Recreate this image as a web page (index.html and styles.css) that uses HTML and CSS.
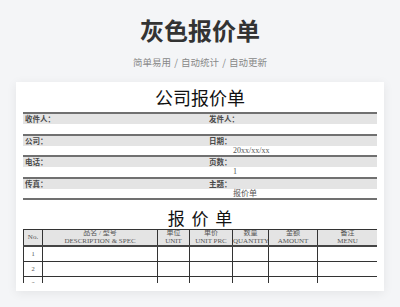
FILE: index.html
```html
<!DOCTYPE html>
<html lang="zh-CN">
<head>
<meta charset="utf-8">
<title>灰色报价单</title>
<link rel="stylesheet" href="styles.css">
</head>
<body>
<header class="hero">
  <h1 class="hero-title">灰色报价单</h1>
  <p class="hero-sub">简单易用 <span class="sep">/</span> 自动统计 <span class="sep">/</span> 自动更新</p>
</header>
<main class="card">
  <div class="sheet">
    <div class="sheet-title">公司报价单</div>
    <div class="info">
      <div class="info-row">
        <div class="cell"><div class="label">收件人：</div><div class="value"></div></div>
        <div class="cell"><div class="label">发件人：</div><div class="value"></div></div>
      </div>
      <div class="info-row">
        <div class="cell"><div class="label">公司：</div><div class="value"></div></div>
        <div class="cell"><div class="label">日期：</div><div class="value">20xx/xx/xx</div></div>
      </div>
      <div class="info-row">
        <div class="cell"><div class="label">电话：</div><div class="value"></div></div>
        <div class="cell"><div class="label">页数：</div><div class="value">1</div></div>
      </div>
      <div class="info-row">
        <div class="cell"><div class="label">传真：</div><div class="value"></div></div>
        <div class="cell"><div class="label">主题：</div><div class="value">报价单</div></div>
      </div>
      <div class="info-end"></div>
    </div>
    <div class="quote-title">报 价 单</div>
    <table class="items">
      <colgroup>
        <col class="c-no"><col class="c-desc"><col class="c-unit"><col class="c-price"><col class="c-qty"><col class="c-amt"><col class="c-memo">
      </colgroup>
      <thead>
        <tr>
          <th>No.</th>
          <th>品名 / 型号<br>DESCRIPTION &amp; SPEC</th>
          <th>单位<br>UNIT</th>
          <th>单价<br>UNIT PRC</th>
          <th>数量<br>QUANTITY</th>
          <th>金额<br>AMOUNT</th>
          <th>备注<br>MENU</th>
        </tr>
      </thead>
      <tbody>
        <tr><td>1</td><td></td><td></td><td></td><td></td><td></td><td></td></tr>
        <tr><td>2</td><td></td><td></td><td></td><td></td><td></td><td></td></tr>
        <tr><td>3</td><td></td><td></td><td></td><td></td><td></td><td></td></tr>
      </tbody>
    </table>
  </div>
</main>
</body>
</html>
```
FILE: styles.css
```css
* { box-sizing: border-box; }
html, body { margin: 0; padding: 0; }
body {
  width: 400px;
  height: 307px;
  overflow: hidden;
  background: #f4f5f7;
  font-family: "Noto Sans CJK SC", "Noto Sans", sans-serif;
  color: #333;
}
.hero { text-align: center; padding-top: 15px; }
.hero-title {
  margin: 0;
  font-size: 24px;
  line-height: 30px;
  font-weight: 700;
  color: #333;
}
.hero-sub {
  margin: 9px 0 0;
  font-size: 9.5px;
  line-height: 16px;
  color: #888;
}
.sep { margin: 0 1px; }
.card {
  margin: 12px 16px 0;
  height: 209px;
  background: #fff;
  box-shadow: 0 2px 10px rgba(0, 0, 0, 0.07);
  padding: 0 7px 8px;
}
.sheet { height: 201px; overflow: hidden; }
.sheet-title {
  height: 30px;
  line-height: 30px;
  text-align: center;
  font-size: 18px;
  color: #111;
}
.info-row {
  display: grid;
  grid-template-columns: 184px 1fr;
  height: 21.5px;
  border-top: 2px solid #707070;
}
.label {
  height: 10px;
  line-height: 10px;
  background: #e4e4e4;
  font-size: 7.5px;
  font-weight: 700;
  color: #4a4a4a;
  padding-left: 2px;
}
.value {
  height: 9.5px;
  line-height: 9.5px;
  padding-left: 26px;
  font-family: "Liberation Serif", serif;
  font-size: 8px;
  color: #555;
}
.info-end { border-top: 2px solid #707070; }
.quote-title {
  margin-top: 9px;
  margin-bottom: 2px;
  line-height: 18px;
  text-align: center;
  font-size: 17px;
  word-spacing: 3px;
  color: #111;
}
.items {
  width: 354px;
  table-layout: fixed;
  border-collapse: collapse;
  font-family: "Liberation Serif", "Noto Sans CJK SC", serif;
  color: #555;
}
.c-no { width: 19px; }
.c-desc { width: 115px; }
.c-unit { width: 32px; }
.c-price { width: 43px; }
.c-qty { width: 36px; }
.c-amt { width: 49px; }
.c-memo { width: 60px; }
.items th, .items td {
  border: 1px solid #333;
  padding: 0;
  text-align: center;
  overflow: hidden;
  white-space: nowrap;
}
.items th {
  height: 16px;
  background: #e4e4e4;
  font-weight: 400;
  font-size: 7px;
  line-height: 7.5px;
  border-bottom: 2px solid #444;
}
.items td {
  height: 15px;
  font-size: 6.5px;
}
```
